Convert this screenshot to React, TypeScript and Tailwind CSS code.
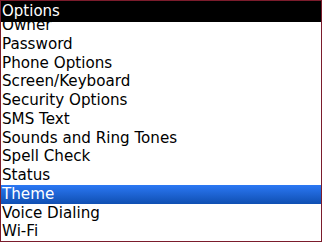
const items = [
  "Owner",
  "Password",
  "Phone Options",
  "Screen/Keyboard",
  "Security Options",
  "SMS Text",
  "Sounds and Ring Tones",
  "Spell Check",
  "Status",
  "Theme",
  "Voice Dialing",
  "Wi-Fi",
];

const selected = "Theme";

export default function App() {
  return (
    <div
      className="relative w-[322px] h-[242px] overflow-hidden border border-[#7b1c2c] bg-white text-black"
      style={{ fontFamily: '"DejaVu Sans", sans-serif' }}
    >
      <div className="absolute top-0 left-0 right-0 h-[21px] bg-black text-white text-[15px] leading-[20px] pl-[1px] z-10">
        Options
      </div>
      <ul className="pt-[15px]">
        {items.map((item) => (
          <li
            key={item}
            className={
              item === selected
                ? "h-[18.75px] leading-[18.75px] text-[15.15px] pl-[1px] text-white bg-gradient-to-b from-[#2b78f4] to-[#0f4fb2]"
                : "h-[18.75px] leading-[18.75px] text-[15.15px] pl-[1px]"
            }
          >
            {item}
          </li>
        ))}
      </ul>
    </div>
  );
}
